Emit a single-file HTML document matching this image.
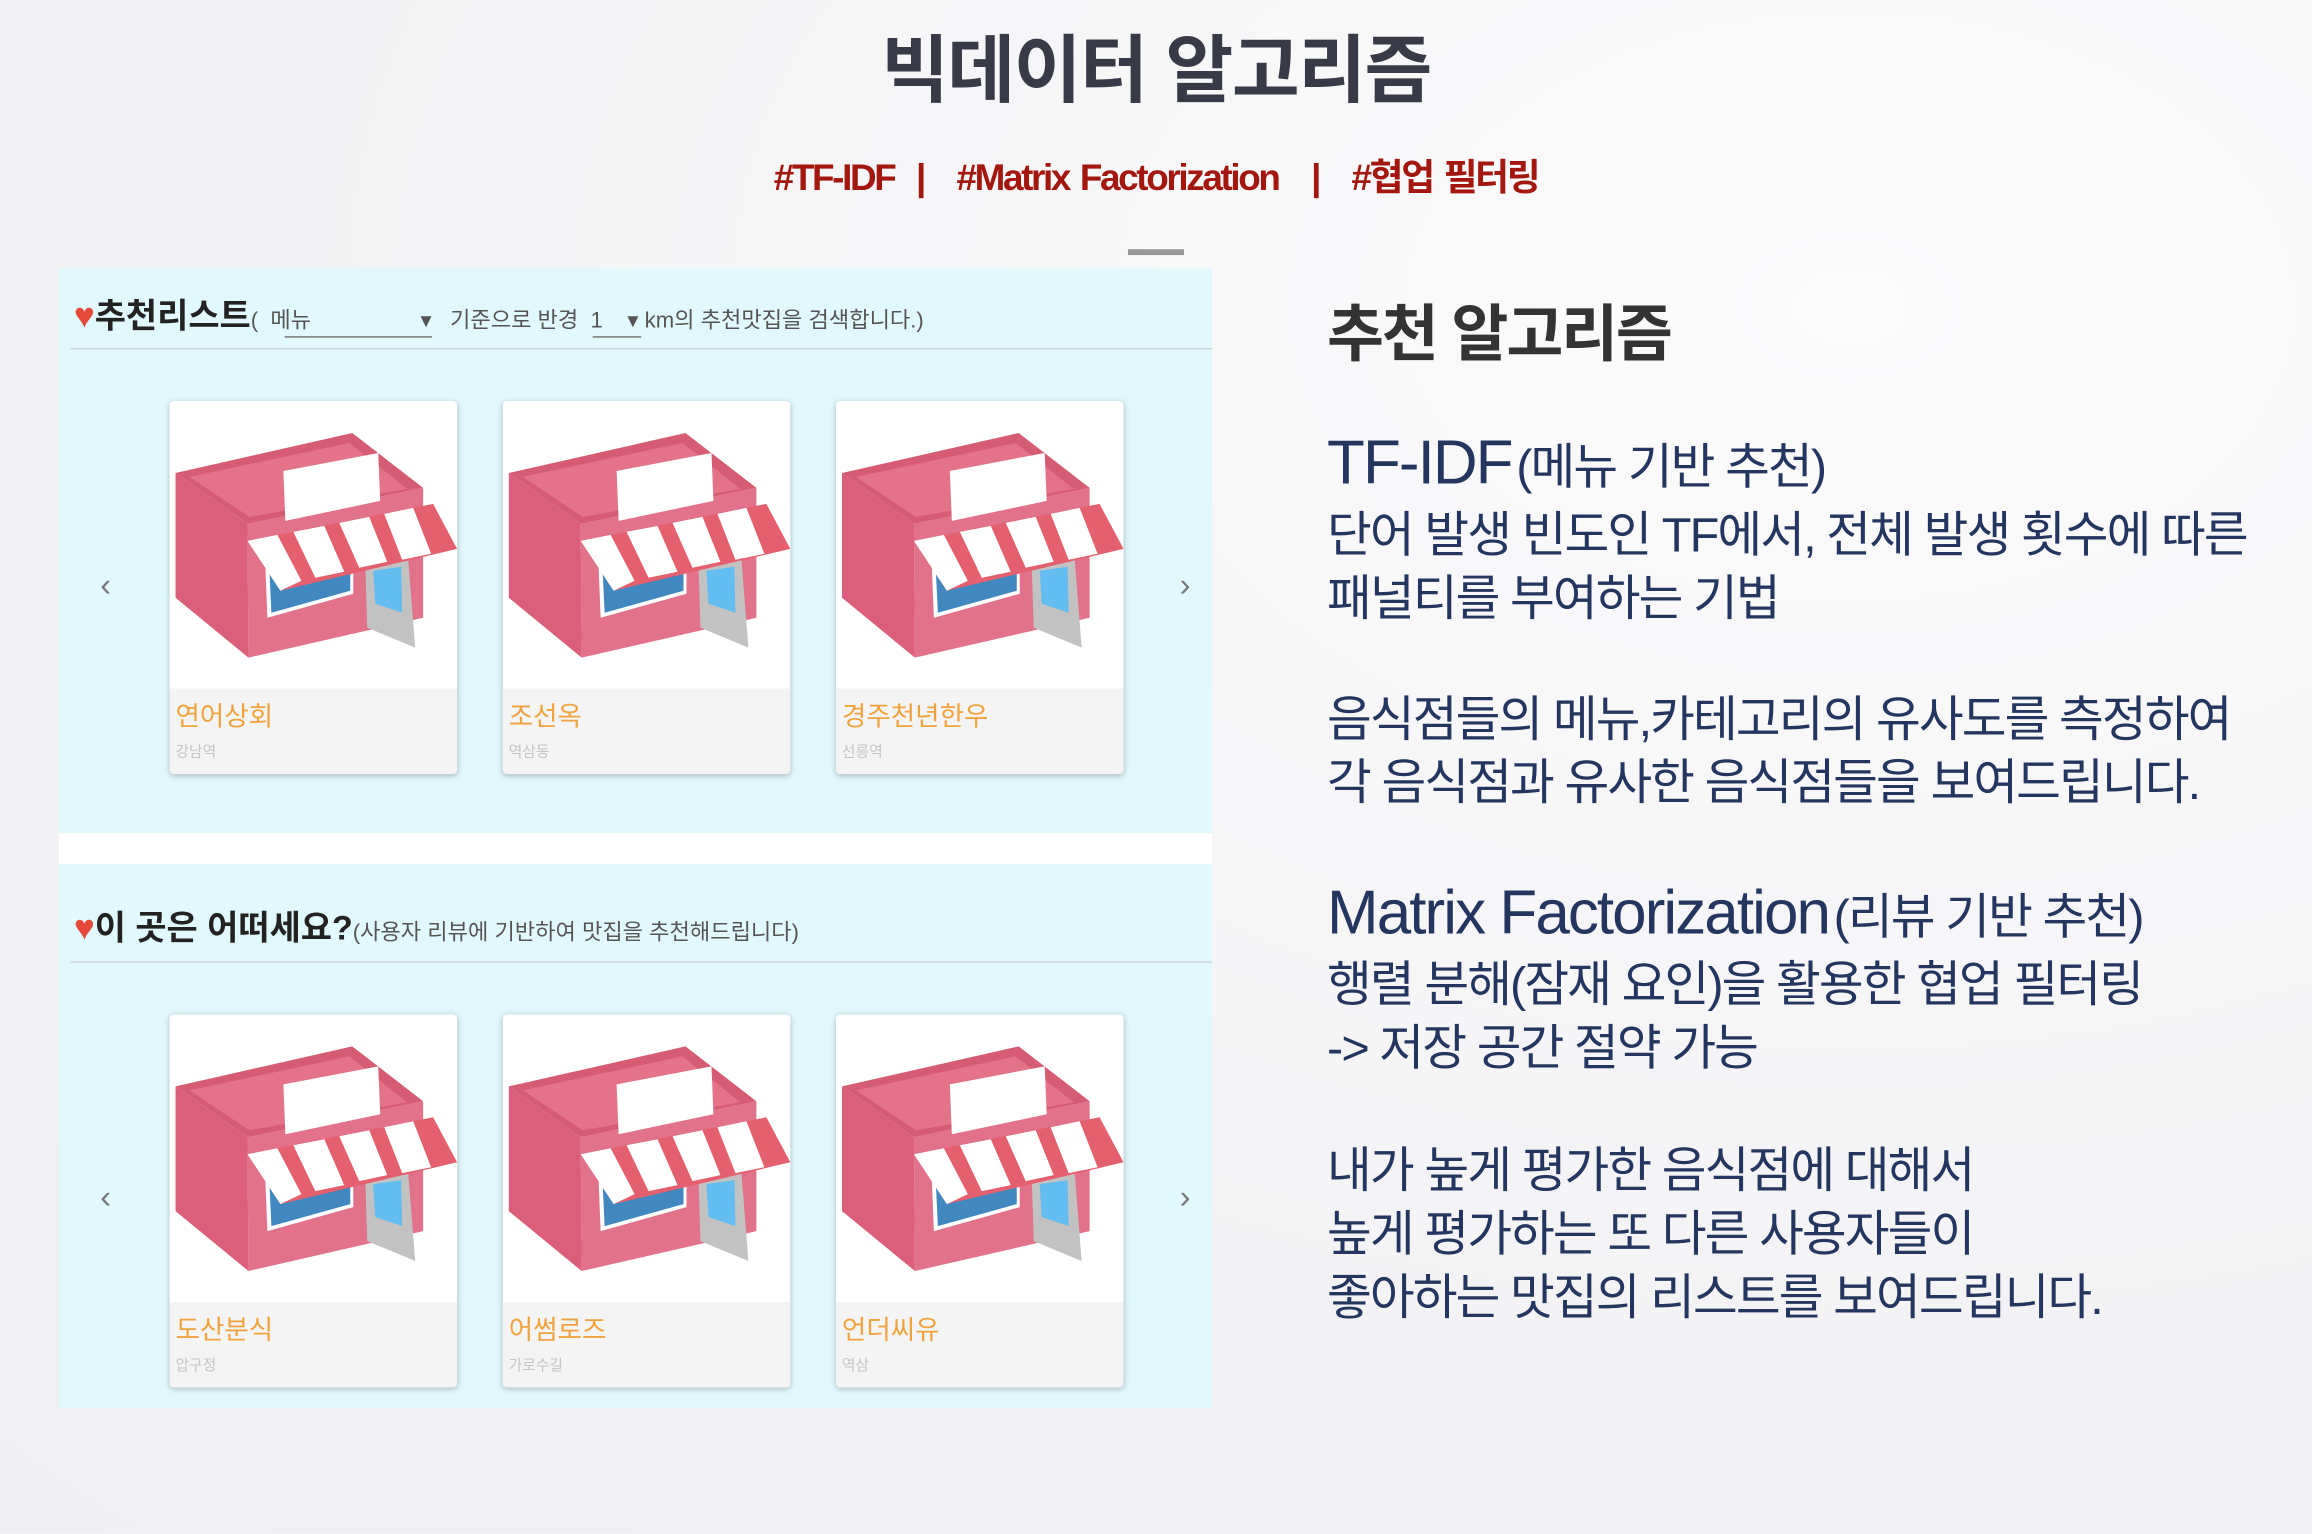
<!DOCTYPE html>
<html><head><meta charset="utf-8"><style>
html,body{margin:0;padding:0;width:2312px;height:1534px;overflow:hidden;background:#f3f3f5;}
#w{position:absolute;left:0;top:0;width:1568px;height:1040px;transform:scale(1.47449);transform-origin:0 0;
background:radial-gradient(ellipse at 80% 20%,#fbfbfc 0%,#f3f3f5 60%,#efeff1 100%);font-family:"Liberation Sans","Noto Sans CJK KR",sans-serif;}
.a{position:absolute;white-space:nowrap;}
.title{left:0;width:1568px;text-align:center;top:8px;font-size:50px;font-weight:bold;color:#383a47;letter-spacing:-1px;}
.tags{left:0;width:1568px;text-align:center;top:101px;font-size:25px;font-weight:bold;color:#a3170f;letter-spacing:-1.6px;word-spacing:2px;}
.panel{position:absolute;left:40px;width:782px;background:#e1f8fd;}
.hdr{position:absolute;left:10px;font-size:23px;font-weight:bold;color:#222;}
.hdr .h{color:#e5493a;font-size:24px;}
.sub{font-size:15px;font-weight:normal;color:#555;}
.line{position:absolute;left:8px;right:0;height:1px;background:#c9d5d8;}
.card{position:absolute;width:195px;height:253px;background:#fff;border-radius:3px;box-shadow:0 1px 4px rgba(0,0,0,.25);overflow:hidden;}
.card svg{position:absolute;left:0;top:0;width:195px;height:195px;}
.card .f{position:absolute;left:0;top:195px;width:195px;height:58px;background:#f4f4f4;}
.card .n{position:absolute;left:4px;top:5px;font-size:18px;color:#f0a23c;}
.card .s{position:absolute;left:4px;top:34px;font-size:10px;color:#c4c4c4;}
.arr{position:absolute;font-size:22px;color:#777;}
.r{color:#243660;letter-spacing:-1.3px;}
.big{font-size:42px;}
.body{font-size:33px;line-height:43px;}
</style></head><body><div id="w">
<svg width="0" height="0" style="position:absolute"><defs>
<symbol id="st" viewBox="0 0 288 288">
<polygon points="6,72 78,123 79,257 6,197" fill="#db5f7a"/>
<polygon points="78,123 254,87 254,217 79,257" fill="#e2718a"/>
<polygon points="6,72 183,32 254,87 78,123" fill="#d65c74"/>
<polygon points="20,76 180,42 238,88 80,116" fill="#e47389"/>
<polygon points="114,70 209,52 211,100 116,120" fill="#fff"/>
<polygon points="96,167 184,152 184,193 98,217" fill="#fff"/>
<polygon points="100,170 181,156 181,190 102,212" fill="#4187c0"/>
<polygon points="196,163 239,158 246,247 198,227" fill="#c2c2c2"/>
<polygon points="204,170 232,166 233,212 206,203" fill="#63bdf0"/>
<polygon points="78,140 264,103 288,148 111,190" fill="#e4606f"/>
<polygon points="78,140 108,134 132,180 111,190" fill="#fff"/>
<polygon points="124,131 155,125 175,171 146,177" fill="#fff"/>
<polygon points="170,122 200,116 218,161 190,167" fill="#fff"/>
<polygon points="215,113 244,107 262,153 233,159" fill="#fff"/>
</symbol></defs></svg>
<div class="a title">빅데이터 알고리즘</div>
<div class="a tags">#TF-IDF &nbsp;| &nbsp; #Matrix Factorization &nbsp; | &nbsp; #협업 필터링</div>
<div class="a" style="left:765px;top:169px;width:38px;height:4px;background:#999;"></div>

<div class="panel" style="top:182px;height:383px;">
 <div class="hdr" style="top:13px;"><span class="h">♥</span>추천리스트<span class="sub">( &nbsp;메뉴 <span style="display:inline-block;width:70px"></span>▾ &nbsp;&nbsp;기준으로 반경 &nbsp;1 &nbsp;&nbsp;&nbsp;▾ km의 추천맛집을 검색합니다.)</span></div>
 <div class="a" style="left:153px;top:46px;width:100px;height:1px;background:#777"></div>
 <div class="a" style="left:362px;top:46px;width:33px;height:1px;background:#777"></div>
 <div class="line" style="top:54px;"></div>
 <div class="arr" style="left:28px;top:202px;">‹</div><div class="arr" style="left:760px;top:202px;">›</div>
 <div class="card" style="left:75px;top:90px;"><svg><use href="#st"/></svg><div class="f"><div class="n">연어상회</div><div class="s">강남역</div></div></div>
 <div class="card" style="left:301px;top:90px;"><svg><use href="#st"/></svg><div class="f"><div class="n">조선옥</div><div class="s">역삼동</div></div></div>
 <div class="card" style="left:527px;top:90px;"><svg><use href="#st"/></svg><div class="f"><div class="n">경주천년한우</div><div class="s">선릉역</div></div></div>
</div>
<div class="a" style="left:40px;top:565px;width:782px;height:21px;background:#fff"></div>
<div class="panel" style="top:586px;height:369px;">
 <div class="hdr" style="top:24px;"><span class="h">♥</span>이 곳은 어떠세요?<span class="sub">(사용자 리뷰에 기반하여 맛집을 추천해드립니다)</span></div>
 <div class="line" style="top:66px;"></div>
 <div class="arr" style="left:28px;top:213px;">‹</div><div class="arr" style="left:760px;top:213px;">›</div>
 <div class="card" style="left:75px;top:102px;"><svg><use href="#st"/></svg><div class="f"><div class="n">도산분식</div><div class="s">압구정</div></div></div>
 <div class="card" style="left:301px;top:102px;"><svg><use href="#st"/></svg><div class="f"><div class="n">어썸로즈</div><div class="s">가로수길</div></div></div>
 <div class="card" style="left:527px;top:102px;"><svg><use href="#st"/></svg><div class="f"><div class="n">언더씨유</div><div class="s">역삼</div></div></div>
</div>

<div class="a" style="left:900px;top:193px;font-size:42px;font-weight:bold;color:#333;letter-spacing:-1.5px;">추천 알고리즘</div>
<div class="a r" style="left:900px;top:290px;"><span class="big">TF-IDF</span> <span style="font-size:33px">(메뉴 기반 추천)</span></div>
<div class="a r body" style="left:900px;top:341px;">단어 발생 빈도인 TF에서, 전체 발생 횟수에 따른<br>패널티를 부여하는 기법</div>
<div class="a r body" style="left:900px;top:466px;">음식점들의 메뉴,카테고리의 유사도를 측정하여<br>각 음식점과 유사한 음식점들을 보여드립니다.</div>
<div class="a r" style="left:900px;top:595px;"><span class="big">Matrix Factorization</span> <span style="font-size:33px">(리뷰 기반 추천)</span></div>
<div class="a r body" style="left:900px;top:646px;">행렬 분해(잠재 요인)을 활용한 협업 필터링<br>-&gt; 저장 공간 절약 가능</div>
<div class="a r body" style="left:900px;top:772px;">내가 높게 평가한 음식점에 대해서<br>높게 평가하는 또 다른 사용자들이<br>좋아하는 맛집의 리스트를 보여드립니다.</div>
</div></body></html>
